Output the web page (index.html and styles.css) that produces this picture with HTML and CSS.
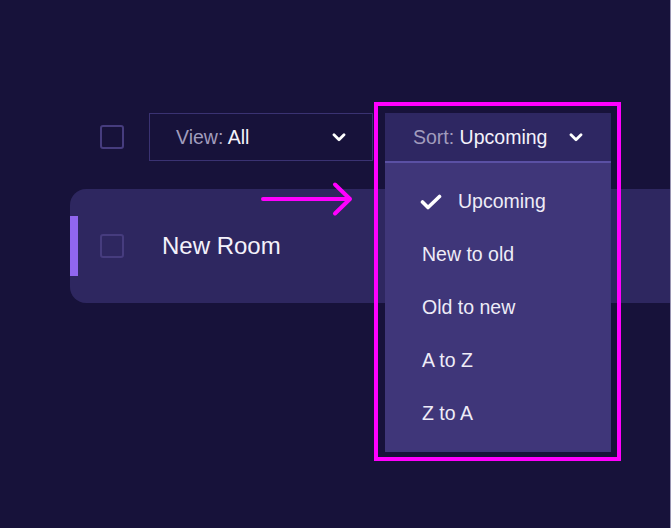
FILE: index.html
```html
<!DOCTYPE html>
<html lang="en">
<head>
<meta charset="utf-8">
<title>Sort menu</title>
<link rel="stylesheet" href="styles.css">
</head>
<body>
<div class="page">
  <div class="toolbar">
    <span class="checkbox"></span>
    <div class="select view">
      <span class="text"><span class="label">View: </span><span class="value">All</span></span>
      <svg class="chev" width="14" height="9" viewBox="0 0 14 9"><path d="M2 1.8 L7 6.8 L12 1.8" fill="none" stroke="#fff" stroke-width="2.8" stroke-linecap="round" stroke-linejoin="round"/></svg>
    </div>
    <div class="sort-wrap">
      <div class="select sort">
        <span class="text"><span class="label">Sort: </span><span class="value">Upcoming</span></span>
        <svg class="chev" width="14" height="9" viewBox="0 0 14 9"><path d="M2 1.8 L7 6.8 L12 1.8" fill="none" stroke="#fff" stroke-width="2.8" stroke-linecap="round" stroke-linejoin="round"/></svg>
      </div>
      <ul class="menu">
        <li class="item selected">
          <svg class="check" width="22" height="16" viewBox="0 0 22 16"><path d="M2.5 8 L8 13.5 L19.5 2.5" fill="none" stroke="#fff" stroke-width="3.6" stroke-linecap="round" stroke-linejoin="round"/></svg>
          <span>Upcoming</span>
        </li>
        <li class="item">New to old</li>
        <li class="item">Old to new</li>
        <li class="item">A to Z</li>
        <li class="item">Z to A</li>
      </ul>
      <div class="highlight"></div>
    </div>
  </div>
  <div class="row">
    <span class="accent"></span>
    <span class="checkbox"></span>
    <span class="name">New Room</span>
  </div>
  <svg class="arrow" width="100" height="40" viewBox="0 0 100 40"><path d="M5 19 L92 19 M77 4.5 L92 19 L77 33.5" fill="none" stroke="#ff00ff" stroke-width="4" stroke-linecap="round" stroke-linejoin="round"/></svg>
</div>
</body>
</html>
```
FILE: styles.css
```css
* { box-sizing: border-box; }
html, body { margin: 0; padding: 0; background: #17123a; }
body { font-family: "Liberation Sans", Arial, sans-serif; color: #f1eff9; }

.page {
  position: relative;
  width: 671px;
  height: 528px;
  overflow: hidden;
  border-right: 1px solid #9a96b2;
}

.toolbar {
  display: flex;
  align-items: center;
  padding-top: 113px;
  padding-left: 100px;
  height: 161px;
}

.checkbox {
  display: block;
  flex: none;
  width: 24px;
  height: 24px;
  border: 2px solid #463c7e;
  border-radius: 3px;
}

.select {
  display: flex;
  align-items: center;
  justify-content: space-between;
  height: 48px;
  font-size: 19.5px;
}
.select .label { color: #a19cbd; }
.select .value { color: #f4f2fb; }
.chev { display: block; flex: none; }

.view {
  width: 224px;
  margin-left: 25px;
  border: 1px solid #3a3272;
  padding: 0 26px 0 26px;
}

.sort-wrap {
  position: relative;
  margin-left: 12px;
  width: 226px;
  height: 48px;
}
.sort {
  width: 226px;
  background: #2e2762;
  padding: 0 28px 0 28px;
}

.menu {
  position: absolute;
  left: 0;
  top: 48px;
  width: 226px;
  margin: 0;
  padding: 12px 0 12px 0;
  list-style: none;
  background: #3f3679;
  border-top: 2px solid #5a50a4;
  z-index: 2;
}
.item {
  display: flex;
  align-items: center;
  height: 53px;
  padding-left: 37px;
  font-size: 19.5px;
  color: #eeecf7;
}
.item.selected { padding-left: 35px; }
.check { display: block; margin-right: 16px; }

.highlight {
  position: absolute;
  left: -11px;
  top: -11px;
  width: 247px;
  height: 359px;
  border: 4px solid #ff00ff;
  z-index: 3;
}

.row {
  display: flex;
  align-items: center;
  margin-top: 28px;
  margin-left: 70px;
  width: 640px;
  height: 114px;
  background: #2e2760;
  border-radius: 16px;
}
.row .accent {
  display: block;
  width: 8px;
  height: 60px;
  background: #9066ee;
  margin-right: 22px;
}
.row .name {
  margin-left: 38px;
  font-size: 24px;
  color: #f4f2fb;
}

.arrow {
  position: absolute;
  left: 258px;
  top: 180px;
  z-index: 4;
}
```
